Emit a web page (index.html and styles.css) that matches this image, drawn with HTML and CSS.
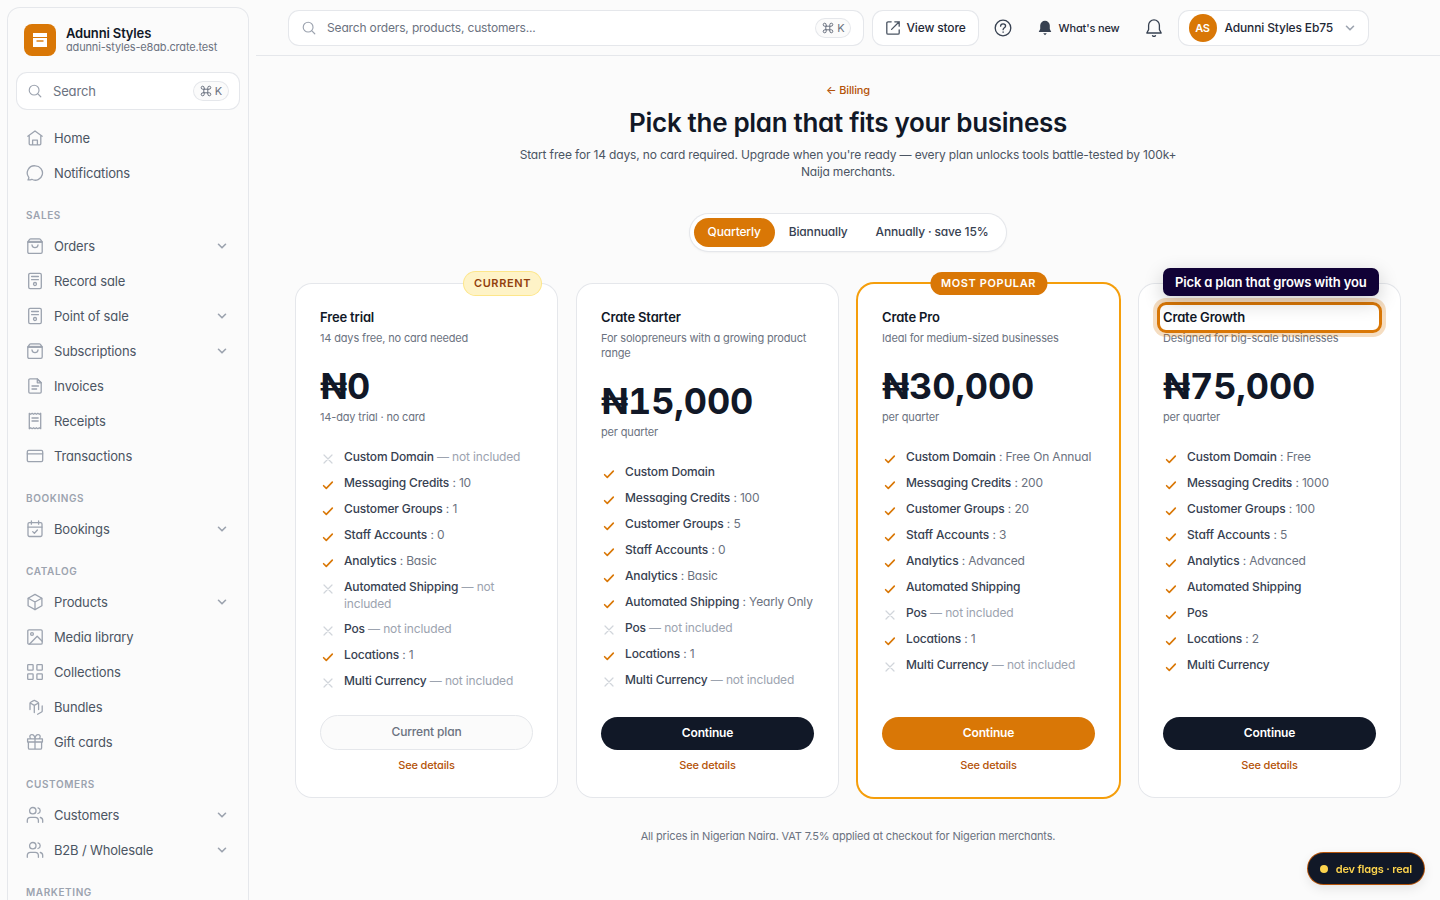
FILE: index.html
```html
<!DOCTYPE html>
<html lang="en">
<head>
    <meta charset="UTF-8">
    <meta name="viewport" content="width=device-width, initial-scale=1.0">
    <title>Plans - Crate</title>
    <link rel="stylesheet" href="styles.css">
</head>
<body>
    <!-- Icon sprite -->
    <svg class="sprite" aria-hidden="true">
        <symbol id="i-search" viewBox="0 0 16 16"><circle cx="7" cy="7" r="5.6"/><path d="M11 11l3.600 3.600"/></symbol>
        <symbol id="i-cmd" viewBox="0 0 12 12"><path d="M4.2 4.2h3.6v3.6H4.2zM4.2 4.2H2.7a1.5 1.5 0 1 1 1.5-1.5zM7.8 4.2V2.7a1.5 1.5 0 1 1 1.5 1.5zM7.8 7.8h1.5a1.5 1.5 0 1 1-1.5 1.5zM4.2 7.8v1.5a1.5 1.5 0 1 1-1.5-1.5z"/></symbol>
        <symbol id="i-chevron" viewBox="0 0 12 12"><path d="M2.5 4.3L6 7.8l3.5-3.5"/></symbol>
        <symbol id="i-home" viewBox="0 0 18 18"><path d="M1.8 7.2L9 2l7.2 5.2M3.200 6.400v8.300c0 .7.400 1.100 1.100 1.100h9.400c.7 0 1.100-.4 1.100-1.100V6.400M6.600 15.800v-4.600h4.800v4.600z"/></symbol>
        <symbol id="i-chat" viewBox="0 0 18 18"><path d="M9.2 1.8a7.2 7.2 0 1 1-3.4 13.5c-.9.4-2.3.8-3.8.6.6-.8.9-1.700.8-2.500A7.200 7.200 0 0 1 9.200 1.800z"/></symbol>
        <symbol id="i-bag" viewBox="0 0 18 18"><path class="tint" d="M1.8 5l2-2.8c.2-.3.5-.4.9-.4h8.6c.4 0 .7.1.9.4l2 2.8z"/><path d="M1.8 5h14.4v10c0 .8-.5 1.3-1.3 1.3H3.1c-.8 0-1.3-.5-1.3-1.3zM6 8c.2 1.7 1.3 2.7 3 2.7s2.800-1 3-2.700"/></symbol>
        <symbol id="i-pos" viewBox="0 0 18 18"><rect x="2.700" y="1.300" width="12.600" height="15.400" rx="1.400"/><path d="M5.600 4.500h6.800M5.600 7.700h6.800"/><circle cx="9" cy="12" r="1.500"/></symbol>
        <symbol id="i-invoice" viewBox="0 0 18 18"><path d="M11.300 1.900H4c-.7 0-1.200.4-1.200 1.100v12c0 .7.5 1.100 1.200 1.100h10c.7 0 1.200-.4 1.200-1.100V5.800z"/><path class="tint" d="M11.300 1.900v3.900h3.900z"/><path d="M6 9h6.500M6 12h4.600"/></symbol>
        <symbol id="i-receipt" viewBox="0 0 18 18"><path d="M3.300 1.300l1.400 1 1.500-1 1.400 1L9 1.300l1.400 1 1.400-1 1.500 1 1.400-1v15.400l-1.400-1-1.500 1-1.400-1-1.400 1-1.400-1-1.400 1-1.500-1-1.400 1z"/><path d="M6 6h6.200M6 9h6.200"/></symbol>
        <symbol id="i-card" viewBox="0 0 18 18"><rect x="1.300" y="3.300" width="15.400" height="11.400" rx="1.400"/><path d="M1.300 6.800h15.400"/></symbol>
        <symbol id="i-calendar" viewBox="0 0 18 18"><rect x="2" y="2.700" width="14" height="13.800" rx="1.400"/><path d="M2 7.100h14M5.400 1v3.200M12.600 1v3.200M6.700 11.600l1.700 1.700 3-3.300"/></symbol>
        <symbol id="i-box" viewBox="0 0 18 18"><path d="M9 1.400l6.900 3.800v7.600L9 16.600l-6.900-3.800V5.200z"/><path d="M2.300 5.300L9 9l6.700-3.700M9 9v7.500"/></symbol>
        <symbol id="i-image" viewBox="0 0 18 18"><rect x="1.800" y="1.800" width="14.400" height="14.400" rx="1.200"/><circle cx="6" cy="6" r="1.400"/><path d="M3.600 16l7.600-7.800 5 5"/></symbol>
        <symbol id="i-grid" viewBox="0 0 18 18"><rect x="1.700" y="1.700" width="5.400" height="5.400" rx=".6"/><rect x="10.900" y="1.700" width="5.400" height="5.400" rx=".6"/><rect x="1.700" y="10.900" width="5.400" height="5.400" rx=".6"/><rect x="10.900" y="10.900" width="5.400" height="5.400" rx=".6"/></symbol>
        <symbol id="i-bundle" viewBox="0 0 18 18"><path d="M4 11.500V5.300c0-.5.200-.8.600-1l3-1.700c.5-.3.900-.3 1.400 0l3 1.700c.4.200.6.500.6 1v6.200M4.200 5l4.100 2.400L12.500 5M8.300 7.400v7.200M16.200 8v5c0 .5-.2.8-.6 1l-4 2.300"/></symbol>
        <symbol id="i-gift" viewBox="0 0 18 18"><path d="M1.600 5.800h14.800V9H1.600zM2.400 9v6c0 .7.500 1.200 1.200 1.200h10.800c.7 0 1.200-.5 1.200-1.200V9M9 5.800v10.400M9 5.800C8.700 3 7.500 1.700 5.900 1.700c-2.700 0-2.700 3.700-.4 4.100M9 5.800c.3-2.800 1.500-4.100 3.100-4.100 2.700 0 2.700 3.700.4 4.100"/></symbol>
        <symbol id="i-users" viewBox="0 0 18 18"><circle cx="6.800" cy="4.700" r="3.200"/><path d="M1.300 16.300v-1.800c0-2 1.300-3.200 3.200-3.200h4.700c1.900 0 3.200 1.200 3.200 3.200v1.800M12 1.900c1.400.4 2.200 1.400 2.200 2.800s-.8 2.400-2.200 2.800M14.300 11.500c1.600.4 2.400 1.500 2.400 3v1.800"/></symbol>
        <symbol id="i-external" viewBox="0 0 16 16"><path d="M6.200 1.800H3.100c-.8 0-1.300.5-1.300 1.300v9.800c0 .8.500 1.300 1.300 1.300h9.800c.8 0 1.300-.5 1.300-1.300V9.800M9.800 1.800h4.400v4.400M14.200 1.800L6.600 9.400"/></symbol>
        <symbol id="i-help" viewBox="0 0 20 20"><circle cx="10" cy="10" r="7.800"/><path d="M7.600 8.200c0-1.400 1-2.400 2.500-2.400s2.500.9 2.500 2.200c0 1.800-2.500 1.900-2.500 3.700M10.100 14v.3"/></symbol>
        <symbol id="i-bell" viewBox="0 0 20 20"><path d="M10 1.900a5.400 5.400 0 0 0-5.400 5.400v4.300L2.800 15h14.400l-1.800-3.400V7.300A5.400 5.400 0 0 0 10 1.900zM8.500 17.700c.8.700 2.200.7 3 0"/></symbol>
        <symbol id="i-bell-solid" viewBox="0 0 14 14"><path class="solid" d="M7 .7a4.200 4.200 0 0 0-4.200 4.200v2.900L1.500 10.600h11l-1.300-2.800V4.900A4.200 4.200 0 0 0 7 .7zM5.400 11.700h3.200L7 13.400z"/></symbol>
        <symbol id="i-check" viewBox="0 0 16 16"><path d="M3.600 9.700l2.700 2.700 6-6.300"/></symbol>
        <symbol id="i-cross" viewBox="0 0 16 16"><path d="M4 5l8 8M12 5l-8 8"/></symbol>
    </svg>

    <div class="layout">
        <aside class="sidebar">
            <div class="panel">
                <div class="store">
                    <span class="store-logo">
                        <svg viewBox="0 0 32 32"><path fill="#fff" d="M9 9h14v4H9zM9 14h14v9H9z"/><path stroke="#d97706" stroke-width="1.4" d="M12.500 17h7"/></svg>
                    </span>
                    <div>
                        <div class="store-name">Adunni Styles</div>
                        <div class="store-url">adunni-styles-e8ab.crate.test</div>
                    </div>
                </div>

                <label class="side-search">
                    <svg class="icon icon-search"><use href="#i-search"/></svg>
                    <input type="text" placeholder="Search" aria-label="Search">
                    <kbd class="kbd"><svg class="icon icon-cmd"><use href="#i-cmd"/></svg>K</kbd>
                </label>

                <nav class="nav">
                    <a class="nav-item" href="#"><svg class="icon"><use href="#i-home"/></svg>Home</a>
                    <a class="nav-item" href="#"><svg class="icon"><use href="#i-chat"/></svg>Notifications</a>

                    <div class="nav-label">Sales</div>
                    <button class="nav-item"><svg class="icon"><use href="#i-bag"/></svg>Orders<svg class="chevron"><use href="#i-chevron"/></svg></button>
                    <a class="nav-item" href="#"><svg class="icon"><use href="#i-pos"/></svg>Record sale</a>
                    <button class="nav-item"><svg class="icon"><use href="#i-pos"/></svg>Point of sale<svg class="chevron"><use href="#i-chevron"/></svg></button>
                    <button class="nav-item"><svg class="icon"><use href="#i-bag"/></svg>Subscriptions<svg class="chevron"><use href="#i-chevron"/></svg></button>
                    <a class="nav-item" href="#"><svg class="icon"><use href="#i-invoice"/></svg>Invoices</a>
                    <a class="nav-item" href="#"><svg class="icon"><use href="#i-receipt"/></svg>Receipts</a>
                    <a class="nav-item" href="#"><svg class="icon"><use href="#i-card"/></svg>Transactions</a>

                    <div class="nav-label">Bookings</div>
                    <button class="nav-item"><svg class="icon"><use href="#i-calendar"/></svg>Bookings<svg class="chevron"><use href="#i-chevron"/></svg></button>

                    <div class="nav-label">Catalog</div>
                    <button class="nav-item"><svg class="icon"><use href="#i-box"/></svg>Products<svg class="chevron"><use href="#i-chevron"/></svg></button>
                    <a class="nav-item" href="#"><svg class="icon"><use href="#i-image"/></svg>Media library</a>
                    <a class="nav-item" href="#"><svg class="icon"><use href="#i-grid"/></svg>Collections</a>
                    <a class="nav-item" href="#"><svg class="icon"><use href="#i-bundle"/></svg>Bundles</a>
                    <a class="nav-item" href="#"><svg class="icon"><use href="#i-gift"/></svg>Gift cards</a>

                    <div class="nav-label">Customers</div>
                    <button class="nav-item"><svg class="icon"><use href="#i-users"/></svg>Customers<svg class="chevron"><use href="#i-chevron"/></svg></button>
                    <button class="nav-item"><svg class="icon"><use href="#i-users"/></svg>B2B / Wholesale<svg class="chevron"><use href="#i-chevron"/></svg></button>

                    <div class="nav-label">Marketing</div>
                </nav>
            </div>
        </aside>

        <div class="content">
            <header class="topbar">
                <label class="top-search">
                    <svg class="icon icon-search"><use href="#i-search"/></svg>
                    <input type="text" placeholder="Search orders, products, customers..." aria-label="Search orders, products, customers">
                    <kbd class="kbd"><svg class="icon icon-cmd"><use href="#i-cmd"/></svg>K</kbd>
                </label>
                <a class="view-store" href="#"><svg class="icon"><use href="#i-external"/></svg>View store</a>
                <button class="icon-btn help" aria-label="Help"><svg class="icon"><use href="#i-help"/></svg></button>
                <button class="whats-new"><svg class="icon"><use href="#i-bell-solid"/></svg>What's new</button>
                <button class="icon-btn bell" aria-label="Alerts"><svg class="icon"><use href="#i-bell"/></svg></button>
                <button class="user">
                    <span class="avatar">AS</span>
                    Adunni Styles Eb75
                    <svg class="chevron"><use href="#i-chevron"/></svg>
                </button>
            </header>

            <main class="main">
                <div class="intro">
                    <a class="back" href="#">← Billing</a>
                    <h1>Pick the plan that fits your business</h1>
                    <p>Start free for 14 days, no card required. Upgrade when you're ready — every plan unlocks tools battle-tested by 100k+ Naija merchants.</p>
                </div>

                <div class="periods">
                    <button class="period active">Quarterly</button>
                    <button class="period">Biannually</button>
                    <button class="period">Annually · save 15%</button>
                </div>

                <div class="plans">
                    <section class="plan">
                        <span class="badge badge-current">Current</span>
                        <h2>Free trial</h2>
                        <p class="tagline">14 days free, no card needed</p>
                        <div class="price">₦0</div>
                        <p class="term">14-day trial · no card</p>
                        <ul class="features">
                            <li class="off"><svg class="icon"><use href="#i-cross"/></svg><span><b>Custom Domain</b> — not included</span></li>
                            <li><svg class="icon"><use href="#i-check"/></svg><span><b>Messaging Credits</b> : 10</span></li>
                            <li><svg class="icon"><use href="#i-check"/></svg><span><b>Customer Groups</b> : 1</span></li>
                            <li><svg class="icon"><use href="#i-check"/></svg><span><b>Staff Accounts</b> : 0</span></li>
                            <li><svg class="icon"><use href="#i-check"/></svg><span><b>Analytics</b> : Basic</span></li>
                            <li class="off"><svg class="icon"><use href="#i-cross"/></svg><span><b>Automated Shipping</b> — not included</span></li>
                            <li class="off"><svg class="icon"><use href="#i-cross"/></svg><span><b>Pos</b> — not included</span></li>
                            <li><svg class="icon"><use href="#i-check"/></svg><span><b>Locations</b> : 1</span></li>
                            <li class="off"><svg class="icon"><use href="#i-cross"/></svg><span><b>Multi Currency</b> — not included</span></li>
                        </ul>
                        <button class="cta cta-current" disabled>Current plan</button>
                        <a class="details" href="#">See details</a>
                    </section>

                    <section class="plan">
                        <h2>Crate Starter</h2>
                        <p class="tagline">For solopreneurs with a growing product range</p>
                        <div class="price">₦15,000</div>
                        <p class="term">per quarter</p>
                        <ul class="features">
                            <li><svg class="icon"><use href="#i-check"/></svg><span><b>Custom Domain</b></span></li>
                            <li><svg class="icon"><use href="#i-check"/></svg><span><b>Messaging Credits</b> : 100</span></li>
                            <li><svg class="icon"><use href="#i-check"/></svg><span><b>Customer Groups</b> : 5</span></li>
                            <li><svg class="icon"><use href="#i-check"/></svg><span><b>Staff Accounts</b> : 0</span></li>
                            <li><svg class="icon"><use href="#i-check"/></svg><span><b>Analytics</b> : Basic</span></li>
                            <li><svg class="icon"><use href="#i-check"/></svg><span><b>Automated Shipping</b> : Yearly Only</span></li>
                            <li class="off"><svg class="icon"><use href="#i-cross"/></svg><span><b>Pos</b> — not included</span></li>
                            <li><svg class="icon"><use href="#i-check"/></svg><span><b>Locations</b> : 1</span></li>
                            <li class="off"><svg class="icon"><use href="#i-cross"/></svg><span><b>Multi Currency</b> — not included</span></li>
                        </ul>
                        <button class="cta">Continue</button>
                        <a class="details" href="#">See details</a>
                    </section>

                    <section class="plan plan-popular">
                        <span class="badge badge-popular">Most popular</span>
                        <h2>Crate Pro</h2>
                        <p class="tagline">Ideal for medium-sized businesses</p>
                        <div class="price">₦30,000</div>
                        <p class="term">per quarter</p>
                        <ul class="features">
                            <li><svg class="icon"><use href="#i-check"/></svg><span><b>Custom Domain</b> : Free On Annual</span></li>
                            <li><svg class="icon"><use href="#i-check"/></svg><span><b>Messaging Credits</b> : 200</span></li>
                            <li><svg class="icon"><use href="#i-check"/></svg><span><b>Customer Groups</b> : 20</span></li>
                            <li><svg class="icon"><use href="#i-check"/></svg><span><b>Staff Accounts</b> : 3</span></li>
                            <li><svg class="icon"><use href="#i-check"/></svg><span><b>Analytics</b> : Advanced</span></li>
                            <li><svg class="icon"><use href="#i-check"/></svg><span><b>Automated Shipping</b></span></li>
                            <li class="off"><svg class="icon"><use href="#i-cross"/></svg><span><b>Pos</b> — not included</span></li>
                            <li><svg class="icon"><use href="#i-check"/></svg><span><b>Locations</b> : 1</span></li>
                            <li class="off"><svg class="icon"><use href="#i-cross"/></svg><span><b>Multi Currency</b> — not included</span></li>
                        </ul>
                        <button class="cta cta-popular">Continue</button>
                        <a class="details" href="#">See details</a>
                    </section>

                    <section class="plan">
                        <h2 class="spotlight">Crate Growth<span class="tip" role="tooltip">Pick a plan that grows with you</span></h2>
                        <p class="tagline">Designed for big-scale businesses</p>
                        <div class="price">₦75,000</div>
                        <p class="term">per quarter</p>
                        <ul class="features">
                            <li><svg class="icon"><use href="#i-check"/></svg><span><b>Custom Domain</b> : Free</span></li>
                            <li><svg class="icon"><use href="#i-check"/></svg><span><b>Messaging Credits</b> : 1000</span></li>
                            <li><svg class="icon"><use href="#i-check"/></svg><span><b>Customer Groups</b> : 100</span></li>
                            <li><svg class="icon"><use href="#i-check"/></svg><span><b>Staff Accounts</b> : 5</span></li>
                            <li><svg class="icon"><use href="#i-check"/></svg><span><b>Analytics</b> : Advanced</span></li>
                            <li><svg class="icon"><use href="#i-check"/></svg><span><b>Automated Shipping</b></span></li>
                            <li><svg class="icon"><use href="#i-check"/></svg><span><b>Pos</b></span></li>
                            <li><svg class="icon"><use href="#i-check"/></svg><span><b>Locations</b> : 2</span></li>
                            <li><svg class="icon"><use href="#i-check"/></svg><span><b>Multi Currency</b></span></li>
                        </ul>
                        <button class="cta">Continue</button>
                        <a class="details" href="#">See details</a>
                    </section>
                </div>

                <p class="footnote">All prices in Nigerian Naira. VAT 7.5% applied at checkout for Nigerian merchants.</p>
            </main>
        </div>
    </div>

    <button class="dev-flags"><span class="dot"></span>dev flags · real</button>
</body>
</html>
```

FILE: styles.css
```css
* {
    box-sizing: border-box;
}
body {
    margin: 0;
    font-family: Inter, "Liberation Sans", sans-serif;
    font-feature-settings: "cv11";
    font-size: 13px;
    letter-spacing: -0.012em;
    color: #111827;
    background-color: #fbfbfb;
}
h1, h2, p, ul {
    margin: 0;
    padding: 0;
}
a {
    color: inherit;
    text-decoration: none;
}
button, input, kbd {
    font: inherit;
    font-feature-settings: inherit;
    letter-spacing: inherit;
    color: inherit;
}
button {
    border: none;
    background: none;
    padding: 0;
    cursor: pointer;
}
input {
    flex: 1;
    min-width: 0;
    border: none;
    outline: none;
    padding: 0;
    background: none;
}
input::placeholder {
    color: #6b7280;
    opacity: 1;
}

/* Icons */
.sprite {
    position: absolute;
    width: 0;
    height: 0;
}
.icon, .chevron {
    flex: none;
    width: 18px;
    height: 18px;
    fill: none;
    stroke: currentColor;
    stroke-width: 1.3;
    stroke-linecap: round;
    stroke-linejoin: round;
}
.chevron {
    width: 12px;
    height: 12px;
    margin-left: auto;
    color: #9ca3af;
    stroke-width: 1.6;
}
.tint {
    fill: currentColor;
    fill-opacity: 0.15;
}
.solid {
    fill: currentColor;
    stroke: none;
}
.icon-search {
    width: 14px;
    height: 14px;
    color: #9ca3af;
}
.icon-cmd {
    width: 12px;
    height: 12px;
    stroke-width: 1;
}
.kbd {
    display: flex;
    align-items: center;
    gap: 3px;
    height: 18px;
    padding: 0 6px;
    border-radius: 9px;
    box-shadow: 0 0 0 1px #e5e7eb;
    background-color: #fbfbfb;
    color: #6b7280;
    font-size: 11px;
}

/* Layout */
.layout {
    display: flex;
    height: 100vh;
    overflow: hidden;
}
.sidebar {
    flex: none;
    width: 256px;
    padding: 8px;
    overflow: hidden;
}
.panel {
    padding: 16px 8px 48px;
    border-radius: 12px;
    box-shadow: 0 0 0 1px #e5e7eb;
}
.content {
    flex: 1;
    min-width: 0;
    overflow: hidden;
}

/* Sidebar */
.store {
    display: flex;
    align-items: center;
    gap: 10px;
    padding: 0 8px;
}
.store-logo {
    width: 32px;
    height: 32px;
    border-radius: 8px;
    background-color: #d97706;
}
.store-name {
    font-weight: 600;
    line-height: 15px;
}
.store-url {
    font-size: 11px;
    line-height: 13px;
    color: #6b7280;
}
.side-search {
    display: flex;
    align-items: center;
    gap: 11px;
    height: 36px;
    margin: 17px 1px 0;
    padding: 0 11px;
    border-radius: 10px;
    box-shadow: 0 0 0 1px #e5e7eb;
    background-color: #fff;
}
.nav {
    display: flex;
    flex-direction: column;
    gap: 2px;
    margin-top: 12px;
}
.nav-item {
    display: flex;
    align-items: center;
    gap: 10px;
    height: 33px;
    padding: 0 12px 0 10px;
    color: #4b5563;
    text-align: left;
}
.nav-item .icon {
    color: #9ca3af;
}
.nav-label {
    margin: 15px 0 3px;
    padding: 0 10px;
    font-size: 10px;
    font-weight: 600;
    line-height: 18px;
    letter-spacing: 0.6px;
    text-transform: uppercase;
    color: #9ca3af;
}

/* Top bar */
.topbar {
    display: flex;
    align-items: center;
    height: 56px;
    padding: 0 72px 0 33px;
    border-bottom: 1px solid #e5e7eb;
    font-size: 12px;
    font-weight: 500;
}
.top-search {
    display: flex;
    flex: 1;
    align-items: center;
    gap: 11px;
    height: 34px;
    margin-right: 10px;
    padding: 0 13px;
    border-radius: 10px;
    box-shadow: 0 0 0 1px #e5e7eb;
    background-color: #fff;
    font-weight: 400;
}
.view-store, .user {
    display: flex;
    align-items: center;
    height: 34px;
    border-radius: 10px;
    box-shadow: 0 0 0 1px #e5e7eb;
    background-color: #fff;
    color: #1f2937;
}
.view-store {
    gap: 5px;
    padding: 0 12px;
}
.view-store .icon {
    width: 16px;
    height: 16px;
    color: #4b5563;
}
.icon-btn {
    display: flex;
    color: #374151;
}
.icon-btn .icon {
    width: 20px;
    height: 20px;
}
.help {
    margin-left: 15px;
}
.whats-new {
    display: flex;
    align-items: center;
    gap: 6px;
    margin: 0 24px;
    font-size: 11px;
    color: #1f2937;
}
.whats-new .icon {
    width: 16px;
    height: 16px;
    color: #374151;
}
.user {
    gap: 8px;
    margin-left: 15px;
    padding: 0 12px 0 10px;
}
.user .chevron {
    margin-left: 3px;
}
.avatar {
    width: 28px;
    height: 28px;
    border-radius: 50%;
    background-color: #d97706;
    color: #fff;
    font-size: 11px;
    font-weight: 600;
    line-height: 28px;
    text-align: center;
}

/* Plans page */
.main {
    padding: 25px 40px;
}
.intro {
    max-width: 672px;
    margin: 0 auto;
    text-align: center;
}
.back {
    display: block;
    font-size: 11px;
    font-weight: 500;
    line-height: 18px;
    color: #b45309;
}
.intro h1 {
    margin-top: 8px;
    font-size: 26px;
    font-weight: 600;
    line-height: 32px;
    letter-spacing: -0.012em;
}
.intro p {
    margin-top: 7px;
    font-size: 12px;
    line-height: 17px;
    color: #4b5563;
}
.periods {
    display: flex;
    width: fit-content;
    margin: 34px auto 0;
    padding: 4px;
    border-radius: 20px;
    box-shadow: 0 0 0 1px #e5e7eb, 0 1px 3px rgba(0, 0, 0, 0.08);
    background-color: #fff;
}
.period {
    height: 29px;
    padding: 0 14px 2px;
    border-radius: 15px;
    font-size: 12px;
    font-weight: 500;
    color: #374151;
}
.period.active {
    background-color: #d97706;
    color: #fff;
}
.plans {
    display: grid;
    grid-template-columns: repeat(4, 1fr);
    gap: 20px;
    margin-top: 33px;
}
.plan {
    position: relative;
    display: flex;
    flex-direction: column;
    padding: 24px;
    border-radius: 16px;
    box-shadow: 0 0 0 1px #e5e7eb;
    background-color: #fff;
}
.plan-popular {
    box-shadow: 0 0 0 2px #f59e0b;
}
.plan h2 {
    font-size: 13px;
    font-weight: 600;
    line-height: 19px;
}
.tagline, .term {
    font-size: 11px;
    line-height: 15px;
    color: #6b7280;
}
.tagline {
    margin-top: 4px;
}
.price {
    margin: 22px 0 6px;
    font-size: 36px;
    font-weight: 700;
    line-height: 36px;
    font-variant-numeric: tabular-nums;
}
.badge {
    position: absolute;
    top: -12px;
    padding: 0 11px;
    border-radius: 12px;
    font-size: 11px;
    font-weight: 600;
    line-height: 23px;
    letter-spacing: 0.6px;
    text-transform: uppercase;
}
.badge-current {
    right: 16px;
    padding: 0 10px;
    box-shadow: 0 0 0 1px #fde68a;
    background-color: #fef3c7;
    color: #92400e;
}
.badge-popular {
    left: 50%;
    transform: translateX(-50%);
    background-color: #d97706;
    color: #fff;
    white-space: nowrap;
}
.features {
    display: flex;
    flex: 1;
    flex-direction: column;
    gap: 8px;
    margin: 23px 0 25px;
    list-style: none;
    font-size: 12px;
    line-height: 17px;
    color: #6b7280;
}
.features li {
    display: flex;
    align-items: flex-start;
    gap: 8px;
}
.features b {
    font-weight: 500;
    color: #374151;
}
.features .icon {
    width: 16px;
    height: 16px;
    margin-top: 2px;
    color: #d97706;
    stroke-width: 1.6;
}
.features .off {
    color: #9ca3af;
}
.features .off .icon {
    color: #d1d5db;
    stroke-width: 1.2;
}
.cta {
    height: 33px;
    padding-bottom: 2px;
    border-radius: 18px;
    background-color: #111827;
    color: #fff;
    font-size: 12px;
    font-weight: 600;
}
.cta-popular {
    background-color: #d97706;
}
.cta-current {
    height: 35px;
    border: 1px solid #e5e7eb;
    background-color: #fbfbfb;
    color: #6b7280;
    font-weight: 500;
}
.details {
    margin-top: 8px;
    font-size: 11px;
    font-weight: 500;
    line-height: 15px;
    text-align: center;
    color: #b45309;
}
.footnote {
    margin-top: 32px;
    font-size: 11px;
    line-height: 15px;
    text-align: center;
    color: #6b7280;
}

/* Tour highlight */
.spotlight {
    position: relative;
}
.spotlight::after {
    content: "";
    position: absolute;
    inset: -6px;
    border: 3px solid #d97706;
    border-radius: 9px;
    box-shadow: 0 0 0 4px rgba(217, 119, 6, 0.25);
}
.tip {
    position: absolute;
    z-index: 1;
    left: 0;
    bottom: calc(100% + 12px);
    padding: 5px 12px 4px;
    border-radius: 7px;
    box-shadow: 0 6px 20px rgba(0, 0, 0, 0.2);
    background-color: #110236;
    color: #fff;
    white-space: nowrap;
}

.dev-flags {
    position: fixed;
    right: 16px;
    bottom: 16px;
    display: flex;
    align-items: center;
    gap: 8px;
    height: 31px;
    padding: 0 12px;
    border-radius: 16px;
    box-shadow: 0 0 0 1px #b45309, 0 4px 12px rgba(0, 0, 0, 0.1);
    background-color: #111827;
    color: #fcd34d;
    font-size: 11px;
    font-weight: 600;
}
.dot {
    width: 8px;
    height: 8px;
    border-radius: 50%;
    background-color: #fcd34d;
}
```
